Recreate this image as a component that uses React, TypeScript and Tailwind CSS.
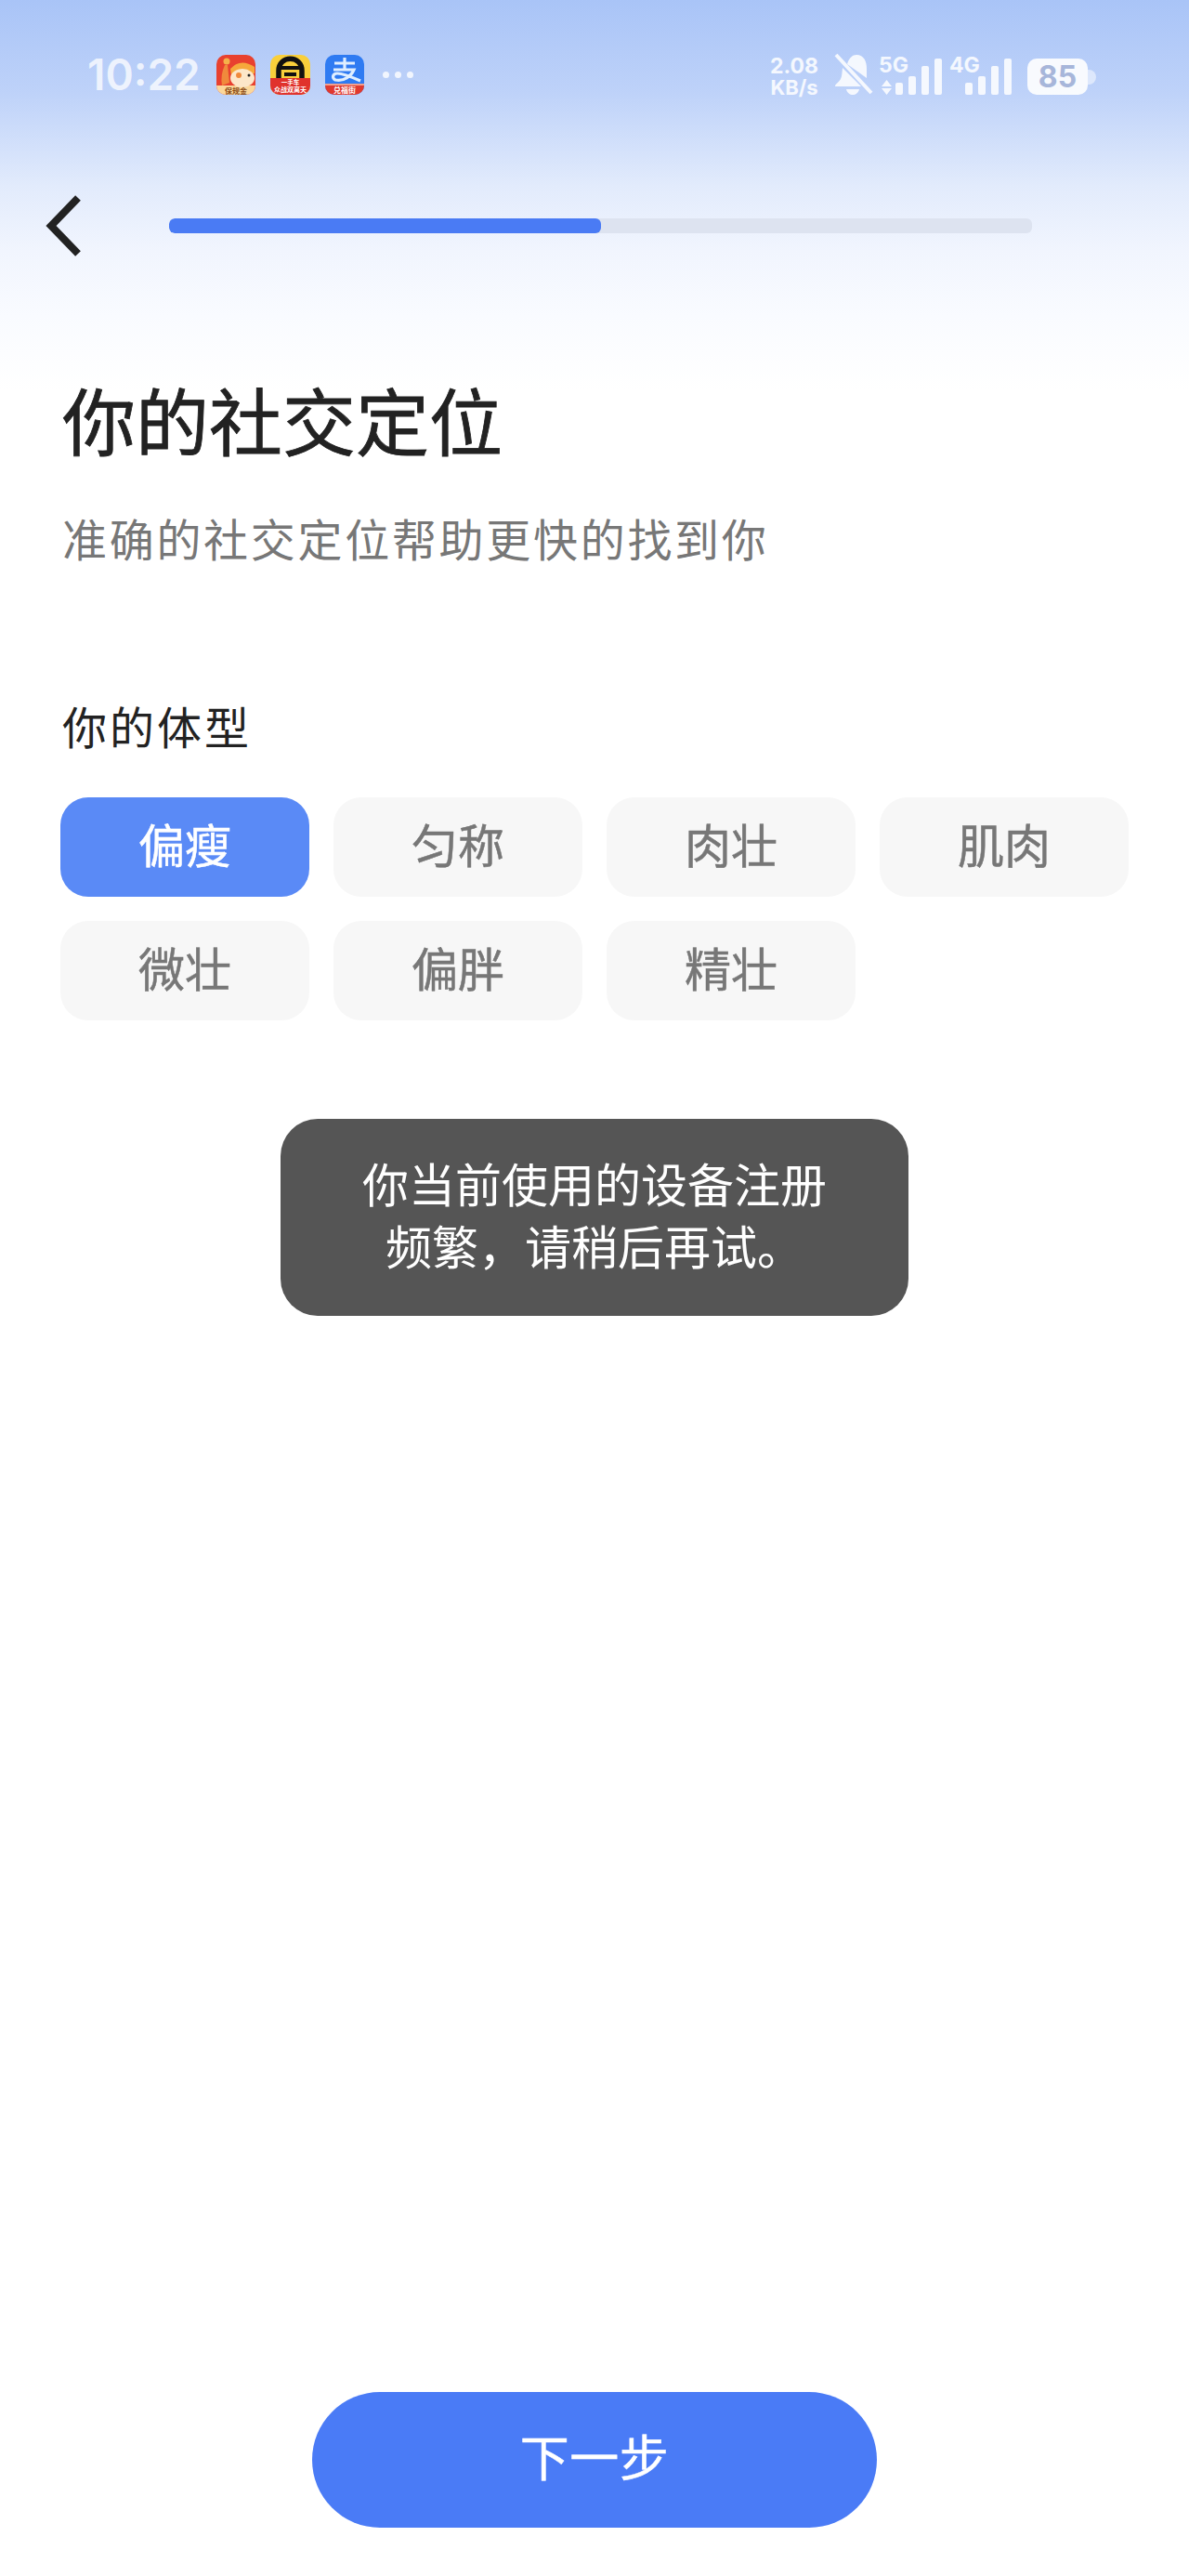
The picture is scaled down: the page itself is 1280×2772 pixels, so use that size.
import React from "react";

const CJK = "font-['Inter','Noto_Sans_CJK_SC',sans-serif]";

function Bars() {
  const hs = [13, 20, 31, 39];
  return (
    <div className="flex items-end gap-[6px]">
      {hs.map((h, i) => (
        <div key={i} className="w-[8px] rounded-[2px] bg-white/85" style={{ height: h }} />
      ))}
    </div>
  );
}

function AppIconA() {
  return (
    <svg width="42" height="43" viewBox="0 0 42 43">
      <defs>
        <clipPath id="a"><rect width="42" height="43" rx="10" /></clipPath>
      </defs>
      <g clipPath="url(#a)">
        <rect width="42" height="43" fill="#e8412f" />
        <rect y="33" width="42" height="10" fill="#fbd79a" />
        <circle cx="11" cy="7" r="3.5" fill="#f5b14a" />
        <path d="M9 11 L12 11 L14 30 L6 33 Q4 22 9 11 Z" fill="#f08a3c" />
        <path d="M15 15 Q26 3 41 13 L41 20 L16 22 Z" fill="#f6a93b" />
        <ellipse cx="28" cy="25" rx="13" ry="10" fill="#fde7c9" />
        <circle cx="24" cy="22" r="3" fill="#f08a3c" />
        <circle cx="35" cy="22" r="1.5" fill="#222" />
        <text x="21" y="41.5" textAnchor="middle" fontSize="8" fontWeight="700" fill="#8a4a14" fontFamily="'Noto Sans CJK SC',sans-serif">保规金</text>
      </g>
    </svg>
  );
}

function AppIconB() {
  return (
    <svg width="43" height="43" viewBox="0 0 43 43">
      <defs>
        <clipPath id="b"><rect width="43" height="43" rx="10" /></clipPath>
      </defs>
      <g clipPath="url(#b)">
        <rect width="43" height="43" fill="#f9cf3b" />
        <path d="M0 25 H43 V43 H0 Z" fill="#e0322c" />
        <path d="M9 25 V17 C9 0 34 0 34 17 V25" fill="none" stroke="#111" strokeWidth="5.5" />
        <path d="M7 14 H36" stroke="#111" strokeWidth="4" />
        <rect x="15" y="19" width="13" height="4" fill="#111" />
        <text x="21.5" y="31.5" textAnchor="middle" fontSize="6.5" fill="#fff" fontWeight="700" fontFamily="'Noto Sans CJK SC',sans-serif">一手车</text>
        <text x="21.5" y="40" textAnchor="middle" fontSize="7" fill="#fff" fontWeight="700" fontFamily="'Noto Sans CJK SC',sans-serif">众战双离天</text>
      </g>
    </svg>
  );
}

function AppIconC() {
  return (
    <svg width="42" height="43" viewBox="0 0 42 43">
      <defs>
        <clipPath id="c"><rect width="42" height="43" rx="10" /></clipPath>
      </defs>
      <g clipPath="url(#c)">
        <rect width="42" height="43" fill="#2f7bf2" />
        <path d="M0 31 H42 V43 H0 Z" fill="#e0392e" />
        <path d="M0 31 H42 V33 H0 Z" fill="#f1a08e" />
        <path d="M10 9 H32 M21 3 V16 M9 16 H31 C28 23 20 29 11 27 C7 25 8 20 13 20 C20 20 29 24 38 28" fill="none" stroke="#dfeeff" strokeWidth="3.2" />
        <text x="21" y="41" textAnchor="middle" fontSize="8" fill="#fff" fontWeight="700" fontFamily="'Noto Sans CJK SC',sans-serif">兑福街</text>
      </g>
    </svg>
  );
}

function BellOff() {
  return (
    <svg width="42" height="46" viewBox="0 0 42 46" className="shrink-0">
      <path d="M14 12 C16 5 20 2 24 2 C32 2 35 9 35 17 V27 Z" fill="#fff" fillOpacity="0.85" />
      <path d="M9 16 L29 36 H1 C1 33 5 32 7 28 C8.5 25 8.5 20 9 16 Z" fill="#fff" fillOpacity="0.85" />
      <path d="M13 39 H27 C26 43 23 45 20 45 C17 45 14 43 13 39 Z" fill="#fff" fillOpacity="0.85" />
      <path d="M2 2 L40 43" stroke="#fff" strokeOpacity="0.85" strokeWidth="4" />
    </svg>
  );
}

function Chip({ label, active }: { label: string; active?: boolean }) {
  return (
    <div
      className={
        active
          ? "h-[107px] flex items-center justify-center rounded-[30px] bg-[#5a8af6] text-white text-[50px] [-webkit-text-stroke:0.5px]"
          : "h-[107px] flex items-center justify-center rounded-[30px] bg-[#f7f7f7] text-[#777777] text-[50px] [-webkit-text-stroke:0.5px]"
      }
    >
      {label}
    </div>
  );
}

export default function App() {
  const chips = ["偏瘦", "匀称", "肉壮", "肌肉", "微壮", "偏胖", "精壮"];
  return (
    <div className={`relative w-[1280px] h-[2772px] flex flex-col overflow-hidden bg-[linear-gradient(to_bottom,#a9c4f7_0px,#bed2f9_100px,#e2ebfc_200px,#f1f5fe_270px,#f9fbff_340px,#ffffff_420px,#ffffff_100%)] ${CJK}`}>
      {/* Status bar */}
      <div className="h-[185px] shrink-0 flex items-start pt-[57px] pl-[94px] pr-[100px] justify-between">
        <div className="flex items-center h-[46px]">
          <span className="text-[46px] leading-none font-semibold text-white/75 w-[139px] font-['Inter',sans-serif]">10:22</span>
          <div className="flex items-center gap-[16px]">
            <AppIconA />
            <AppIconB />
            <AppIconC />
          </div>
          <div className="flex gap-[6px] ml-[20px]">
            <div className="w-[7px] h-[7px] rounded-full bg-white/80" />
            <div className="w-[7px] h-[7px] rounded-full bg-white/80" />
            <div className="w-[7px] h-[7px] rounded-full bg-white/80" />
          </div>
        </div>
        <div className="flex items-end h-[46px] font-['Inter',sans-serif] text-white/85 font-bold">
          <div className="flex flex-col items-center w-[54px] text-[23px] leading-[26px] mr-[16px] -mb-[1px]">
            <span>2.08</span>
            <span className="text-[22px] leading-[20px]">KB/s</span>
          </div>
          <BellOff />
          <div className="relative w-[68px] h-[44px] ml-[6px]">
            <span className="absolute left-0 top-0 text-[23px] leading-[22px]">5G</span>
            <svg className="absolute left-[3px] bottom-[1px]" width="11" height="16" viewBox="0 0 11 16">
              <path d="M5.5 0 L11 7 H0 Z M5.5 16 L0 9 H11 Z" fill="#fff" fillOpacity="0.85" />
            </svg>
            <div className="absolute right-0 bottom-[1px]"><Bars /></div>
          </div>
          <div className="relative w-[67px] h-[44px] ml-[8px]">
            <span className="absolute left-0 top-0 text-[23px] leading-[22px]">4G</span>
            <div className="absolute right-0 bottom-[1px]"><Bars /></div>
          </div>
          <div className="flex items-center ml-[17px] mb-[1px]">
            <div className="w-[65px] h-[39px] rounded-[10px] bg-white/90 flex items-center justify-center text-[32px] font-bold text-[#a7b6da]">85</div>
            <div className="w-[9px] h-[16px] rounded-r-full bg-white/50" />
          </div>
        </div>
      </div>

      {/* Nav with progress */}
      <div className="h-[116px] shrink-0 flex items-center pl-[49px]">
        <svg width="40" height="66" viewBox="0 0 40 66" className="shrink-0">
          <path d="M35 3 L6 33 L35 63" fill="none" stroke="#222222" strokeWidth="8" />
        </svg>
        <div className="ml-[93px] w-[929px] h-[16px] rounded-[6px] bg-[#dde3f0] overflow-hidden">
          <div className="h-full w-[50%] rounded-[6px] bg-[#4a7bf4]" />
        </div>
      </div>

      {/* Heading */}
      <div className="px-[67px] mt-[109px]">
        <h1 className="text-[79px] leading-[92px] font-normal tracking-[0px] text-[#222222] [-webkit-text-stroke:0.8px]">你的社交定位</h1>
        <p className="mt-[48px] text-[48px] leading-[64px] tracking-[2.7px] text-[#777777]">准确的社交定位帮助更快的找到你</p>
        <p className="mt-[138px] text-[48px] leading-[64px] tracking-[3px] text-[#222222]">你的体型</p>
      </div>

      {/* Chips */}
      <div className="mt-[42px] pl-[65px] grid grid-cols-[repeat(4,268px)] gap-[26px]">
        {chips.map((c, i) => (
          <Chip key={c} label={c} active={i === 0} />
        ))}
      </div>

      {/* Button */}
      <div className="mt-auto mb-[52px] flex justify-center">
        <div className="w-[608px] h-[146px] rounded-full bg-[#4a7bf6] flex items-center justify-center text-white text-[53px] tracking-[0.5px] [-webkit-text-stroke:0.5px]">下一步</div>
      </div>

      {/* Toast */}
      <div className="absolute left-[302px] top-[1204px] w-[676px] h-[212px] rounded-[40px] bg-[#555555] flex flex-col items-center justify-center text-white text-[50px] leading-[67px]">
        <span>你当前使用的设备注册</span>
        <span>频繁，请稍后再试。</span>
      </div>
    </div>
  );
}
